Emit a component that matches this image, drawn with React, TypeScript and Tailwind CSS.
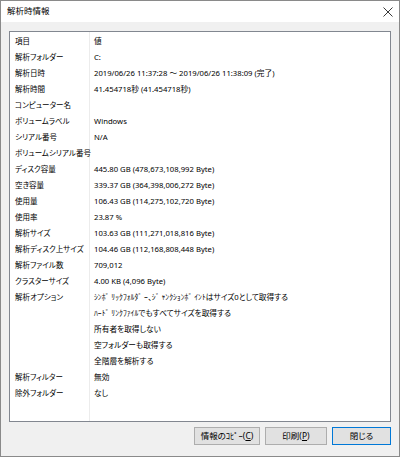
import React from "react";

const rows: [string, string][] = [
  ["項目", "値"],
  ["解析フォルダー", "C:"],
  ["解析日時", "2019/06/26 11:37:28 ～ 2019/06/26 11:38:09 (完了)"],
  ["解析時間", "41.454718秒 (41.454718秒)"],
  ["コンピューター名", ""],
  ["ボリュームラベル", "Windows"],
  ["シリアル番号", "N/A"],
  ["ボリュームシリアル番号", ""],
  ["ディスク容量", "445.80 GB (478,673,108,992 Byte)"],
  ["空き容量", "339.37 GB (364,398,006,272 Byte)"],
  ["使用量", "106.43 GB (114,275,102,720 Byte)"],
  ["使用率", "23.87 %"],
  ["解析サイズ", "103.63 GB (111,271,018,816 Byte)"],
  ["解析ディスク上サイズ", "104.46 GB (112,168,808,448 Byte)"],
  ["解析ファイル数", "709,012"],
  ["クラスターサイズ", "4.00 KB (4,096 Byte)"],
  ["解析オプション", "ｼﾝﾎﾞ ﾘｯｸﾌｫﾙﾀﾞ ｰ、ｼﾞ ｬﾝｸｼｮﾝﾎﾞ ｲﾝﾄはサイズ0として取得する"],
  ["", "ﾊｰﾄﾞ ﾘﾝｸﾌｧｲﾙでもすべてサイズを取得する"],
  ["", "所有者を取得しない"],
  ["", "空フォルダーも取得する"],
  ["", "全階層を解析する"],
  ["解析フィルター", "無効"],
  ["除外フォルダー", "なし"],
];

export default function App() {
  return (
    <div
      className="w-[400px] h-[457px] flex flex-col border border-[#8a8a8a] bg-[#f0f0f0] text-black overflow-hidden [font-feature-settings:'palt']"
      style={{ fontFamily: '"Noto Sans", "Noto Sans CJK JP", sans-serif' }}
    >
      <div className="h-[21px] bg-white flex items-center justify-between pl-[6px] pr-[5px] shrink-0">
        <span className="text-[8.5px] leading-none">解析時情報</span>
        <svg width="10" height="10" viewBox="0 0 10 10" className="mr-[1px]">
          <path d="M0.5 0.5 L9.5 9.5 M9.5 0.5 L0.5 9.5" stroke="#222" strokeWidth="0.9" fill="none" />
        </svg>
      </div>
      <div className="flex-1 flex flex-col px-[8px] pt-[9px] pb-[10px]">
        <div className="h-[391px] bg-white border border-[#828790] relative flex">
          <div className="w-[80px] border-r border-[#ececec] flex flex-col pt-[2px]">
            {rows.map(([k], i) => (
              <div key={i} className="h-[16px] flex items-center pl-[5px] text-[7.5px] leading-none whitespace-nowrap">
                {k}
              </div>
            ))}
          </div>
          <div className="flex-1 flex flex-col pt-[2px]">
            {rows.map(([, v], i) => (
              <div key={i} className="h-[16px] flex items-center pl-[4px] text-[7.7px] leading-none whitespace-nowrap">
                {v}
              </div>
            ))}
          </div>
        </div>
        <div className="flex justify-end gap-[5px] mt-[5px]">
          <button className="w-[66px] h-[18px] bg-[#e1e1e1] border border-[#adadad] text-[8.5px] leading-none flex items-center justify-center">
            情報のｺﾋﾟｰ(<span className="underline">C</span>)
          </button>
          <button className="w-[62px] h-[18px] bg-[#e1e1e1] border border-[#adadad] text-[8.5px] leading-none flex items-center justify-center">
            印刷(<span className="underline">P</span>)
          </button>
          <button className="w-[59px] h-[18px] bg-[#e1e1e1] border-[1.5px] border-[#0078d7] text-[8.5px] leading-none flex items-center justify-center">
            閉じる
          </button>
        </div>
      </div>
    </div>
  );
}
